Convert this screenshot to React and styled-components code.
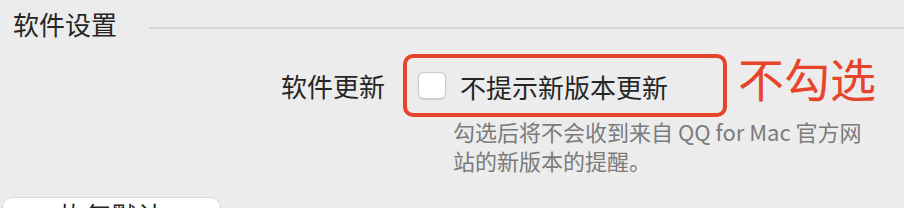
import React from 'react';
import styled, { createGlobalStyle } from 'styled-components';

const Global = createGlobalStyle`
  html, body {
    margin: 0;
    padding: 0;
    background: #ececec;
  }
  body {
    font-family: "Noto Sans CJK SC", "Noto Sans", sans-serif;
    color: #262626;
    overflow: hidden;
  }
`;

const Page = styled.div`
  width: 904px;
  height: 208px;
  display: flex;
  flex-direction: column;
  background: #ececec;
`;

const Header = styled.div`
  display: flex;
  align-items: center;
  margin-top: 11px;
  padding-left: 13px;
  height: 26px;
`;

const Title = styled.div`
  font-size: 26px;
  line-height: 26px;
  white-space: nowrap;
`;

const Rule = styled.div`
  flex: 1;
  height: 2px;
  margin-left: 32px;
  margin-top: 7px;
  background: #d6d6d6;
`;

const Row = styled.div`
  display: flex;
  align-items: center;
  margin-top: 17px;
`;

const Label = styled.div`
  width: 385px;
  text-align: right;
  font-size: 26px;
  line-height: 26px;
`;

const Highlight = styled.div`
  box-sizing: border-box;
  width: 324px;
  height: 63px;
  margin-left: 18px;
  border: 4px solid ${(p) => p.color};
  border-radius: 10px;
  display: flex;
  align-items: center;
  padding-left: 11px;
  gap: 14px;
`;

const Box = styled.span`
  box-sizing: border-box;
  width: 28px;
  height: 27px;
  background: #fff;
  border: 1px solid #cdcdcd;
  border-radius: 6px;
  box-shadow: 0 0.5px 1px rgba(0, 0, 0, 0.12);
`;

const OptionText = styled.span`
  font-size: 26px;
  line-height: 26px;
  margin-top: 2px;
`;

const Note = styled.div`
  align-self: flex-start;
  margin-left: 11px;
  font-size: 46px;
  line-height: 46px;
  color: ${(p) => p.color};
`;

const Hint = styled.div`
  margin-left: 453px;
  width: 428px;
  font-size: 22px;
  line-height: 29px;
  color: #7b7b7b;
`;

const ResetButton = styled.button`
  flex-shrink: 0;
  margin: 23px 0 0 3px;
  width: 217px;
  height: 34px;
  border: none;
  border-radius: 9px;
  background: #fff;
  box-shadow: 0 0 0 0.5px rgba(0, 0, 0, 0.12), 0 1px 2px rgba(0, 0, 0, 0.15);
  font-family: inherit;
  font-size: 26px;
  line-height: 26px;
  color: #262626;
  padding: 0;
`;

const RED = '#e8432b';

export default function App() {
  return (
    <>
      <Global />
      <Page>
        <Header>
          <Title>软件设置</Title>
          <Rule />
        </Header>
        <Row>
          <Label>软件更新</Label>
          <Highlight color={RED}>
            <Box />
            <OptionText>不提示新版本更新</OptionText>
          </Highlight>
          <Note color={RED}>不勾选</Note>
        </Row>
        <Hint>勾选后将不会收到来自 QQ for Mac 官方网站的新版本的提醒。</Hint>
        <ResetButton>恢复默认</ResetButton>
      </Page>
    </>
  );
}
